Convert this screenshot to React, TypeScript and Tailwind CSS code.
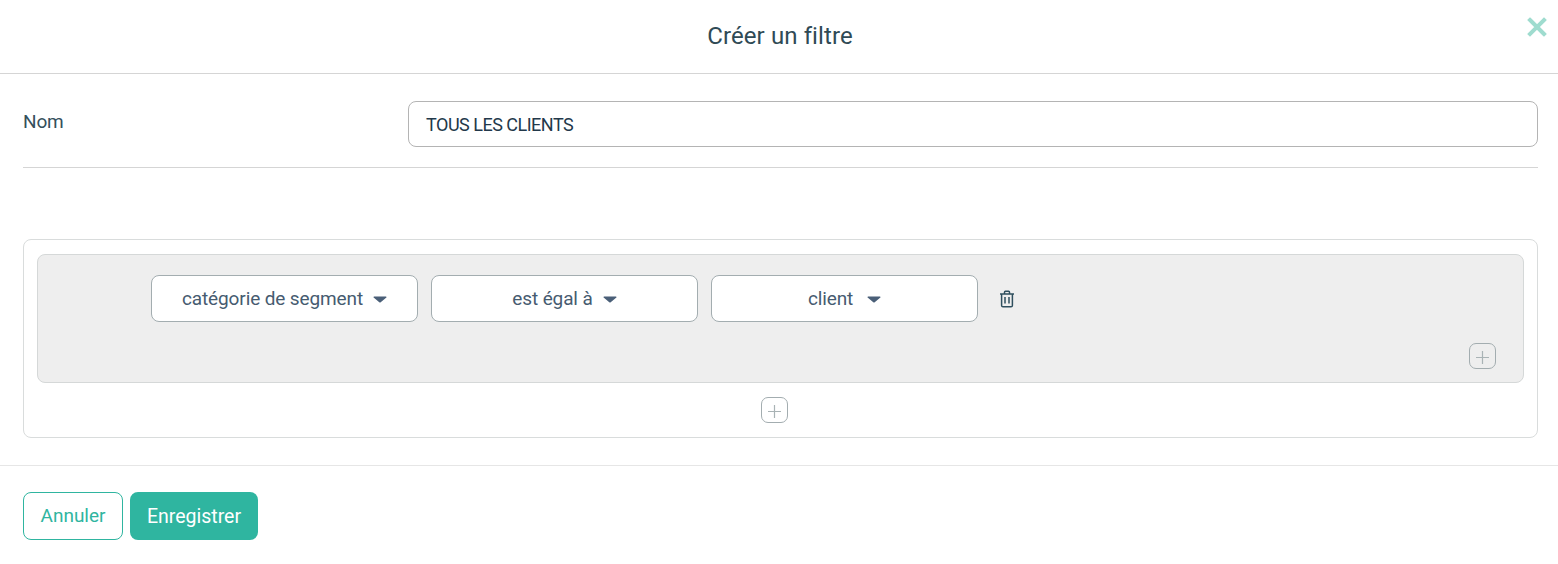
const font = "font-['Roboto',sans-serif]";

function Caret() {
  return (
    <svg width="14" height="7" viewBox="0 0 14 7" className="mt-[2px] shrink-0">
      <path d="M1 0.5h12a.6.6 0 0 1 .4 1L7.4 6.4a.6.6 0 0 1-.8 0L.6 1.5a.6.6 0 0 1 .4-1z" fill="#4a5f78" />
    </svg>
  );
}

function Select({ label, gap }: { label: string; gap: string }) {
  return (
    <div className={`flex h-[47px] w-[267px] items-center justify-center rounded-[8px] border border-[#a3adb0] bg-white text-[19px] tracking-[-0.12px] text-[#465b70] ${gap}`}>
      <span className="pt-[2px]">{label}</span>
      <Caret />
    </div>
  );
}

function PlusButton() {
  return (
    <div className="flex h-[26px] w-[27px] items-center justify-center rounded-[7px] border border-[#a3adb0]">
      <svg width="15" height="15" viewBox="0 0 15 15" className="mt-[3px]">
        <path d="M7.5 1v13M1 7.5h13" stroke="#a9b3b5" strokeWidth="1.2" fill="none" />
      </svg>
    </div>
  );
}

export default function App() {
  return (
    <div className={`h-[564px] w-[1558px] overflow-hidden bg-white ${font}`}>
      <header className="relative flex h-[74px] items-center justify-center border-b border-[#d5d5d5] pb-[1px] pl-[2px]">
        <h1 className="text-[24px] tracking-[0.1px] text-[#2f4a55]">Créer un filtre</h1>
        <svg width="20" height="20" viewBox="0 0 20 20" className="absolute right-[11px] top-[17px]">
          <path d="M3 3l14 14M17 3L3 17" stroke="#9fdccf" strokeWidth="4" strokeLinecap="square" fill="none" />
        </svg>
      </header>

      <div className="pr-[20px] pl-[23px]">
        <div className="flex h-[94px] items-start border-b border-[#d5d5d5] pt-[27px]">
          <label className="w-[385px] pt-[1px] text-[19px] leading-[40px] tracking-[-0.15px] text-[#35505c]">Nom</label>
          <div className="flex h-[46px] flex-1 items-center rounded-[8px] border border-[#b4b4b4] px-[17px] text-[18px] tracking-[-0.5px] text-[#22384a]">
            TOUS LES CLIENTS
          </div>
        </div>

        <div className="mt-[71px] flex h-[199px] flex-col rounded-[8px] border border-[#d9dcdc] px-[13px] pt-[14px]">
          <div className="flex h-[129px] flex-col rounded-[8px] border border-[#d5d8d8] bg-[#eeeeee] pl-[113px] pr-[27px] pt-[20px]">
            <div className="flex items-center gap-[13px]">
              <Select label="catégorie de segment" gap="gap-[10px]" />
              <Select label="est égal à" gap="gap-[10px]" />
              <Select label="client" gap="gap-[14px]" />
              <svg width="16" height="18" viewBox="0 0 16 18" className="ml-[8px]" fill="none" stroke="#2f4f5e" strokeWidth="1.5">
                <path d="M1 4h14" />
                <path d="M5.5 4V2.2c0-.5.4-.9.9-.9h3.2c.5 0 .9.4.9.9V4" />
                <path d="M2.6 4v11.4c0 .8.6 1.4 1.4 1.4h8c.8 0 1.4-.6 1.4-1.4V4" />
                <path d="M6 7v6.5M10 7v6.5" />
              </svg>
            </div>
            <div className="mt-[21px] flex justify-end">
              <PlusButton />
            </div>
          </div>
          <div className="mt-[14px] flex justify-center pr-[12px]">
            <PlusButton />
          </div>
        </div>
      </div>

      <footer className="mt-[27px] flex gap-[7px] border-t border-[#e6e6e6] pl-[23px] pt-[26px]">
        <button className="flex h-[48px] w-[100px] items-center justify-center rounded-[8px] border border-[#2fb5a0] bg-white pt-[1px] text-[19px] text-[#2fb5a0]">
          Annuler
        </button>
        <button className="flex h-[48px] w-[128px] items-center justify-center rounded-[8px] bg-[#2fb5a0] pt-[2px] text-[19.5px] text-white">
          Enregistrer
        </button>
      </footer>
    </div>
  );
}
